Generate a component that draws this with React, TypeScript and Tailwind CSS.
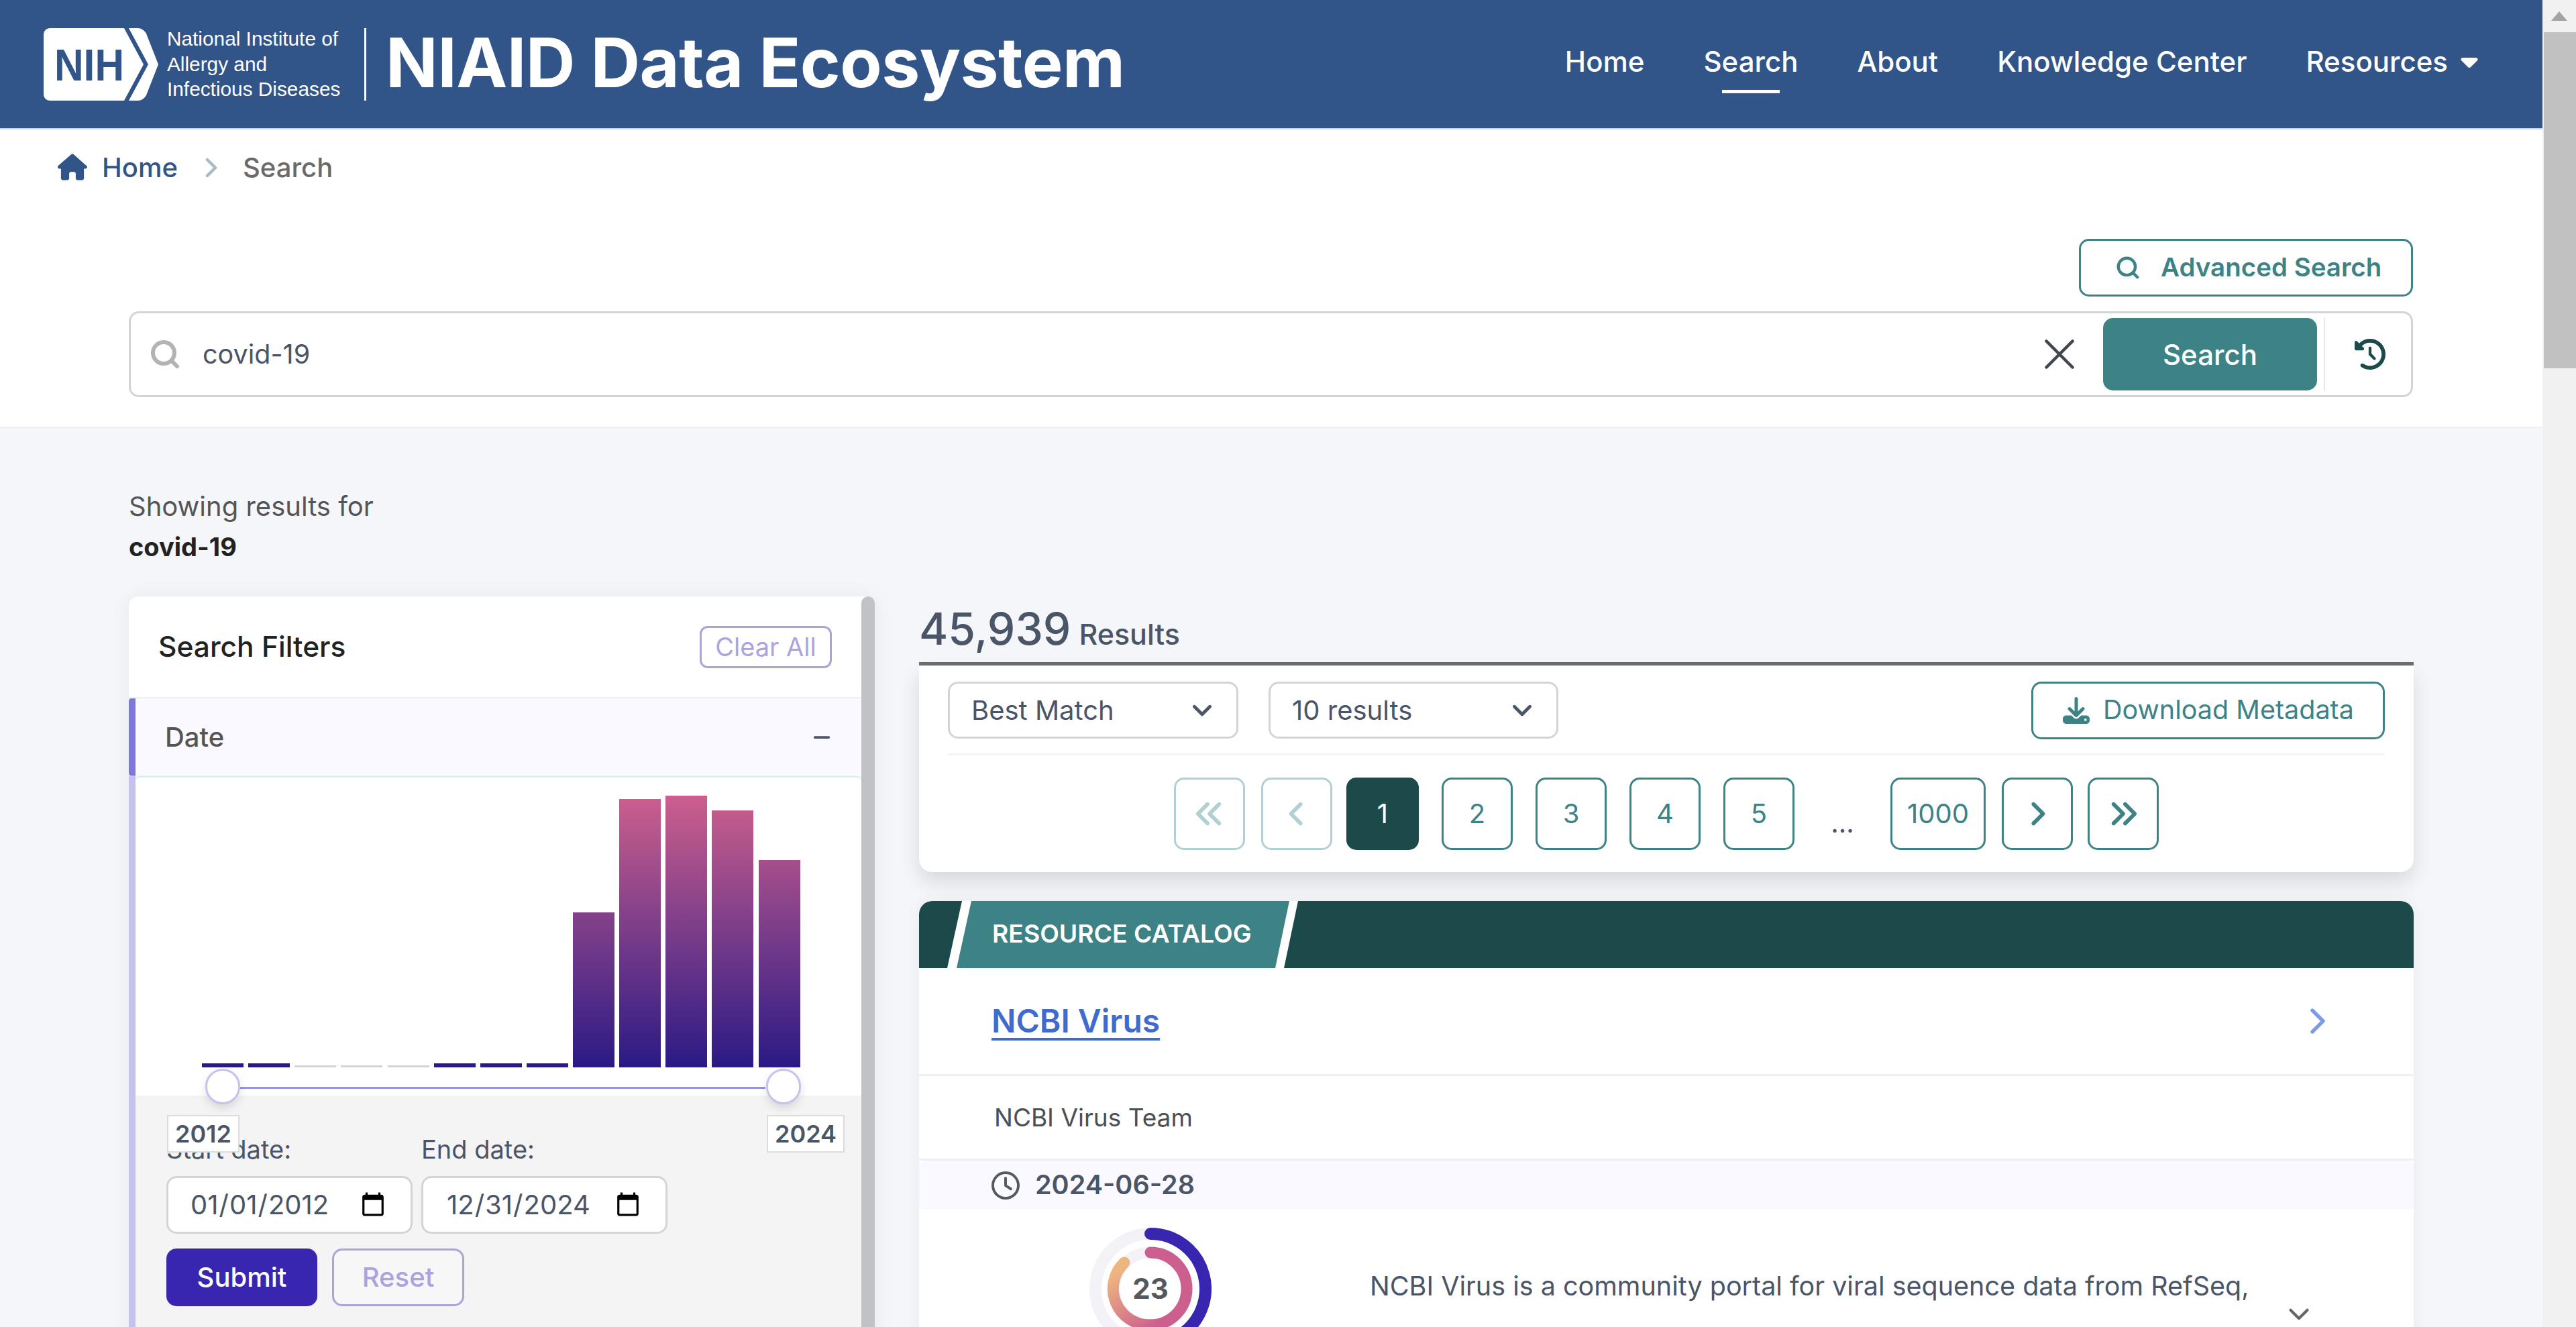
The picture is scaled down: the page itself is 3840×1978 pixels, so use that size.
import React from "react";
import { ChevronDown, ChevronRight, Search, X } from "lucide-react";
import {
  FaAngleLeft,
  FaAngleRight,
  FaAnglesLeft,
  FaAnglesRight,
  FaCaretDown,
  FaClockRotateLeft,
  FaDownload,
  FaHouse,
  FaMinus,
  FaRegClock,
} from "react-icons/fa6";

const bars = [
  { x: 99, top: 426, on: true },
  { x: 168, top: 426, on: true },
  { x: 237, top: 429, on: false },
  { x: 306, top: 429, on: false },
  { x: 376, top: 429, on: false },
  { x: 445, top: 426, on: true },
  { x: 514, top: 426, on: true },
  { x: 583, top: 426, on: true },
  { x: 652, top: 201, on: true },
  { x: 721, top: 32, on: true },
  { x: 790, top: 27, on: true },
  { x: 859, top: 49, on: true },
  { x: 929, top: 123, on: true },
];

const pageBtn =
  "w-[106px] h-[108px] rounded-[15px] border-[3px] border-[#3d8284] text-[#3d8284] bg-white flex items-center justify-center text-[40px]";
const pageBtnOff =
  "w-[106px] h-[108px] rounded-[15px] border-[3px] border-[#b1d0d1] text-[#b1d0d1] bg-white flex items-center justify-center text-[40px]";

const NihLogo = () => (
  <svg width="171" height="108" viewBox="0 0 171 108" className="shrink-0">
    <path
      d="M10 0H120L149 54L120 108H10C4 108 0 104 0 98V10C0 4 4 0 10 0Z"
      fill="#fff"
    />
    <path d="M127 0H140C146 0 150 3 153 8L171 54L153 100C150 105 146 108 140 108H127L156 54Z" fill="#fff" />
    <text
      x="16"
      y="78"
      fontFamily="Liberation Sans, Arial, sans-serif"
      fontSize="67"
      fontWeight="700"
      fill="#325589"
      textLength="104"
      lengthAdjust="spacingAndGlyphs"
    >
      NIH
    </text>
  </svg>
);

const ScoreDonut = () => (
  <svg width="182" height="184" viewBox="0 0 182 184" className="shrink-0">
    <defs>
      <linearGradient id="ringFade" gradientUnits="userSpaceOnUse" x1="91" y1="154" x2="30" y2="60">
        <stop offset="0" stopColor="#cc5f8e" />
        <stop offset="0.9" stopColor="#edb580" />
      </linearGradient>
    </defs>
    <circle cx="91" cy="91" r="82" fill="none" stroke="#f2f2f7" strokeWidth="18" />
    <circle cx="91" cy="91" r="54" fill="none" stroke="#f2f2f7" strokeWidth="17" />
    <path d="M91 9A82 82 0 0 1 132 162" fill="none" stroke="#3826b0" strokeWidth="18" strokeLinecap="round" />
    <path d="M91 37A54 54 0 0 1 91 145" fill="none" stroke="#cc5f8e" strokeWidth="17" strokeLinecap="round" />
    <path d="M91 145A54 54 0 0 1 52 52" fill="none" stroke="url(#ringFade)" strokeWidth="17" strokeLinecap="round" />
  </svg>
);

export default function App() {
  return (
    <div className="flex h-[1978px] w-[3840px] overflow-hidden bg-[#f4f6fa] font-['Inter',sans-serif] text-[40px] text-[#4a5568]">
      <div className="w-[3790px] shrink-0">
        {/* Header */}
        <header className="h-[193px] border-b-[2px] border-[#cfd4d8] bg-[#325589] flex items-center justify-between pl-[65px] pr-[95px] text-white">
          <div className="flex items-center">
            <NihLogo />
            <div className="ml-[13px] font-['Liberation_Sans',Arial,sans-serif] text-[29.8px] leading-[37.5px] w-[266px] whitespace-nowrap">
              <div>National Institute of</div>
              <div>Allergy and</div>
              <div>Infectious Diseases</div>
            </div>
            <div className="ml-[28px] w-[3px] h-[108px] bg-white" />
            <div className="ml-[29px] mb-[6px] text-[102px] leading-none font-bold tracking-[-0.6px]">NIAID Data Ecosystem</div>
          </div>
          <nav className="flex items-center gap-[88px] mb-[9px] text-[42px] font-medium">
            <a>Home</a>
            <a className="relative">
              Search
              <span className="absolute left-[28px] right-[28px] -bottom-[16px] h-[5px] bg-white" />
            </a>
            <a>About</a>
            <a>Knowledge Center</a>
            <a className="flex items-center gap-[18px]">
              Resources <FaCaretDown className="w-[28px] h-[40px]" />
            </a>
          </nav>
        </header>

        {/* Breadcrumb + search */}
        <section className="h-[445px] border-b-[2px] border-[#eceef2] bg-white">
          <div className="pt-[36px] pl-[86px] h-[163px] flex items-start text-[40px] leading-[42px]">
            <FaHouse className="w-[44px] h-[40px] text-[#325589]" />
            <span className="ml-[22px] text-[#325589] font-medium">Home</span>
            <ChevronRight className="ml-[26px] -mt-[3px] w-[48px] h-[48px] text-[#a9bac7]" strokeWidth={2.25} />
            <span className="ml-[23px] text-[#6a6a6a] font-medium">Search</span>
          </div>
          <div className="pl-[192px] pr-[193px]">
            <div className="flex justify-end">
              <button className="w-[498px] h-[86px] rounded-[15px] border-[3px] border-[#3d8284] text-[#3d8284] flex items-center pl-[51px] text-[38.5px] font-semibold">
                <Search className="w-[38px] h-[38px]" strokeWidth={2.75} />
                <span className="ml-[30px]">Advanced Search</span>
              </button>
            </div>
            <div className="mt-[22px] h-[128px] rounded-[15px] border-[3px] border-[#d4d4d4] flex items-center pl-[27px] pr-[38px]">
              <Search className="w-[48px] h-[48px] text-[#b3b3b3]" strokeWidth={3} />
              <input
                defaultValue="covid-19"
                className="ml-[32px] mt-[2px] flex-1 min-w-0 outline-none text-[39.5px] text-[#4a5568]"
              />
              <X className="w-[78px] h-[78px] text-[#3f4650]" strokeWidth={1.4} />
              <button className="ml-[26px] w-[319px] h-[108px] rounded-[15px] bg-[#3d8284] text-white text-[42px] font-medium">
                Search
              </button>
              <div className="ml-[10px] w-[2px] h-[108px] bg-[#e6e6e6]" />
              <FaClockRotateLeft className="ml-[44px] w-[46px] h-[46px] text-[#1c4a4a]" />
            </div>
          </div>
        </section>

        {/* Results area */}
        <section className="pl-[192px] pr-[192px] pt-[87px]">
          <div className="leading-[60px] text-[40px] text-[#555]">Showing results for</div>
          <div className="leading-[60px] text-[38px] font-bold text-[#222]">covid-19</div>

          <div className="mt-[44px] flex items-start">
            {/* Filters */}
            <aside className="w-[1112px] h-[1200px] shrink-0 flex bg-white rounded-t-[15px] shadow-[0_0_30px_rgba(0,0,0,0.06)]">
              <div className="flex-1 min-w-0">
                <div className="h-[152px] border-b-[2px] border-[#eeeef5] flex items-center justify-between pl-[44px] pr-[44px]">
                  <span className="text-[42.5px] font-medium text-[#222]">Search Filters</span>
                  <button className="w-[197px] h-[63px] rounded-[12px] border-[3px] border-[#aba3df] text-[#aba3df] text-[38px]">
                    Clear All
                  </button>
                </div>
                <div className="h-[115px] border-l-[10px] border-[#8078d8] bg-[#f9f9ff] flex items-center justify-between pl-[44px] pr-[44px] rounded-l-[4px]">
                  <span className="text-[40px] font-medium text-[#555]">Date</span>
                  <FaMinus className="w-[30px] h-[30px] text-[#4a5568]" />
                </div>
                <div className="border-l-[10px] border-[#c6c2ef] h-[840px] bg-[#f4f4f4]">
                  <div className="relative h-[477px] bg-white border-t-[3px] border-[#e0f0ef] rounded-t-[8px]">
                    <svg width="1080" height="432" viewBox="0 0 1080 432" className="block">
                      <defs>
                        <linearGradient id="barFill" gradientUnits="userSpaceOnUse" x1="0" y1="27" x2="0" y2="432">
                          <stop offset="0" stopColor="#cc5f8e" />
                          <stop offset="1" stopColor="#2a1a85" />
                        </linearGradient>
                      </defs>
                      {bars.map((b) => (
                        <rect
                          key={b.x}
                          x={b.x}
                          y={b.top}
                          width={62}
                          height={432 - b.top}
                          fill={b.on ? "url(#barFill)" : "#d5d5d5"}
                        />
                      ))}
                    </svg>
                    {/* range slider */}
                    <div className="absolute left-[156px] top-[461px] w-[783px] h-[3px] bg-[#9a94e4]" />
                    <div className="absolute left-[104px] top-[434px] w-[52px] h-[53px] rounded-full bg-white border-[3px] border-[#c6c2ef] shadow-[0_6px_14px_rgba(0,0,0,0.12)]" />
                    <div className="absolute left-[940px] top-[434px] w-[52px] h-[53px] rounded-full bg-white border-[3px] border-[#c6c2ef] shadow-[0_6px_14px_rgba(0,0,0,0.12)]" />
                  </div>
                  <div className="relative pl-[46px] pt-[55px]">
                    <div className="absolute left-[47px] top-[29px] w-[108px] h-[56px] bg-white border-[2px] border-[#dcdcdc] flex items-center justify-center text-[36px] font-semibold">
                      2012
                    </div>
                    <div className="absolute left-[941px] top-[29px] w-[116px] h-[56px] bg-white border-[2px] border-[#dcdcdc] flex items-center justify-center text-[36px] font-semibold">
                      2024
                    </div>
                    <div className="flex gap-[13px]">
                      <label className="block w-[367px]">
                        <div className="h-[50px] leading-[50px] text-[38px]">Start date:</div>
                        <input
                          type="date"
                          defaultValue="2012-01-01"
                          className="mt-[15px] w-full h-[86px] rounded-[15px] border-[3px] border-[#d4d4d4] bg-white pl-[32px] pr-[34px] text-[40px] text-[#4a5568]"
                        />
                      </label>
                      <label className="block w-[367px]">
                        <div className="h-[50px] leading-[50px] text-[38px]">End date:</div>
                        <input
                          type="date"
                          defaultValue="2024-12-31"
                          className="mt-[15px] w-full h-[86px] rounded-[15px] border-[3px] border-[#d4d4d4] bg-white pl-[34px] pr-[34px] text-[40px] text-[#4a5568]"
                        />
                      </label>
                    </div>
                    <div className="mt-[22px] flex gap-[22px]">
                      <button className="w-[225px] h-[86px] rounded-[15px] bg-[#3826b0] text-white text-[40px] font-medium">
                        Submit
                      </button>
                      <button className="w-[197px] h-[86px] rounded-[15px] border-[3px] border-[#aba3df] bg-[#f7f7f7] text-[#aba3df] text-[40px] font-medium">
                        Reset
                      </button>
                    </div>
                  </div>
                </div>
              </div>
              <div className="w-[20px] shrink-0 rounded-t-full bg-[#c1c2c6]" />
            </aside>

            {/* Results */}
            <div className="ml-[66px] w-[2228px] shrink-0">
              <div className="h-[98px] flex items-baseline pt-[12px] whitespace-nowrap">
                <span className="text-[66px] leading-[72px] font-medium">45,939</span>
                <span className="ml-[12px] text-[43px] font-medium">Results</span>
              </div>
              <div className="h-[5px] bg-[#6e6e6e]" />
              <div className="bg-white rounded-b-[20px] px-[43px] pt-[24px] h-[308px] shadow-[0_14px_30px_rgba(0,0,0,0.12)]">
                <div className="h-[110px] border-b-[3px] border-[#f4f4fb] flex items-start">
                  <button className="w-[433px] h-[85px] rounded-[15px] border-[3px] border-[#d4d4d4] flex items-center justify-between pl-[32px] pr-[28px]">
                    Best Match
                    <ChevronDown className="w-[46px] h-[46px]" strokeWidth={2.5} />
                  </button>
                  <button className="ml-[45px] w-[432px] h-[85px] rounded-[15px] border-[3px] border-[#d4d4d4] flex items-center justify-between pl-[32px] pr-[28px]">
                    10 results
                    <ChevronDown className="w-[46px] h-[46px]" strokeWidth={2.5} />
                  </button>
                  <button className="ml-auto w-[527px] h-[86px] rounded-[15px] border-[3px] border-[#3d8284] text-[#3d8284] flex items-center pl-[44px] text-[39.5px]">
                    <FaDownload className="w-[40px] h-[40px]" />
                    <span className="ml-[20px]">Download Metadata</span>
                  </button>
                </div>
                <div className="pt-[33px] flex justify-center items-start">
                  <div className="flex gap-[24px]">
                    <div className={pageBtnOff}>
                      <FaAnglesLeft className="w-[46px] h-[46px]" />
                    </div>
                    <div className={pageBtnOff}>
                      <FaAngleLeft className="w-[46px] h-[46px]" />
                    </div>
                  </div>
                  <div className="ml-[21px] w-[108px] h-[108px] rounded-[15px] bg-[#1c4a4a] text-white flex items-center justify-center">
                    1
                  </div>
                  <div className="ml-[34px] flex gap-[34px]">
                    <div className={pageBtn}>2</div>
                    <div className={pageBtn}>3</div>
                    <div className={pageBtn}>4</div>
                    <div className={pageBtn}>5</div>
                  </div>
                  <div className="ml-[55px] w-[33px] h-[108px] flex items-end justify-center pb-[10px] text-[#4a5568]">...</div>
                  <div className="ml-[55px] w-[142px] h-[108px] rounded-[15px] border-[3px] border-[#3d8284] text-[#3d8284] flex items-center justify-center">
                    1000
                  </div>
                  <div className="ml-[24px] flex gap-[22px]">
                    <div className={pageBtn}>
                      <FaAngleRight className="w-[46px] h-[46px]" />
                    </div>
                    <div className={pageBtn}>
                      <FaAnglesRight className="w-[46px] h-[46px]" />
                    </div>
                  </div>
                </div>
              </div>

              <article className="mt-[43px] bg-white rounded-t-[20px] shadow-[0_0_24px_rgba(0,0,0,0.05)]">
                <div className="h-[100px] rounded-t-[20px] bg-[#1c4a4a] pl-[42px]">
                  <div className="w-[523px] h-full bg-white pl-[14px] [clip-path:polygon(22px_0,100%_0,calc(100%-21px)_100%,0_100%)]">
                    <div className="w-[496px] h-full bg-[#3d8284] pl-[53px] pb-[2px] flex items-center text-[37.3px] font-semibold text-white [clip-path:polygon(22px_0,100%_0,calc(100%-21px)_100%,0_100%)]">
                      RESOURCE CATALOG
                    </div>
                  </div>
                </div>
                <div className="h-[161px] border-b-[3px] border-[#eeeef5] flex items-center justify-between pl-[108px] pr-[111px]">
                  <a className="text-[48px] font-semibold text-[#3f6bd0] underline underline-offset-[8px]">NCBI Virus</a>
                  <ChevronRight className="w-[64px] h-[64px] text-[#7b9be8]" strokeWidth={2} />
                </div>
                <div className="h-[126px] border-b-[3px] border-[#eeeef5] flex items-center pl-[112px] text-[37px] text-[#4a4f55]">
                  NCBI Virus Team
                </div>
                <div className="h-[73px] bg-[#f9f9ff] flex items-center pl-[108px] rounded-[8px]">
                  <FaRegClock className="w-[42px] h-[42px] text-[#555a61]" />
                  <span className="ml-[23px] text-[39.5px] font-semibold">2024-06-28</span>
                </div>
                <div className="relative flex items-start pl-[255px] pt-[27px]">
                  <div className="relative -ml-[1px]">
                    <ScoreDonut />
                    <span className="absolute left-0 right-0 top-[68px] text-center text-[42px] leading-[46px] font-bold text-[#55585e]">
                      23
                    </span>
                  </div>
                  <p className="ml-[236px] mt-[57px] text-[39.5px] leading-[60px] whitespace-nowrap">
                    NCBI Virus is a community portal for viral sequence data from RefSeq,
                  </p>
                  <ChevronDown className="absolute left-[2032px] top-[131px] w-[50px] h-[50px] text-[#666]" strokeWidth={2} />
                </div>
              </article>
            </div>
          </div>
        </section>
      </div>

      {/* Browser scrollbar */}
      <div className="w-[50px] shrink-0 bg-[#f1f1f1] flex flex-col">
        <div className="h-[48px] flex items-center justify-center">
          <div className="w-0 h-0 border-l-[12px] border-r-[12px] border-b-[14px] border-l-transparent border-r-transparent border-b-[#a3a3a3]" />
        </div>
        <div className="h-[501px] ml-[2px] bg-[#c1c1c1]" />
      </div>
    </div>
  );
}
